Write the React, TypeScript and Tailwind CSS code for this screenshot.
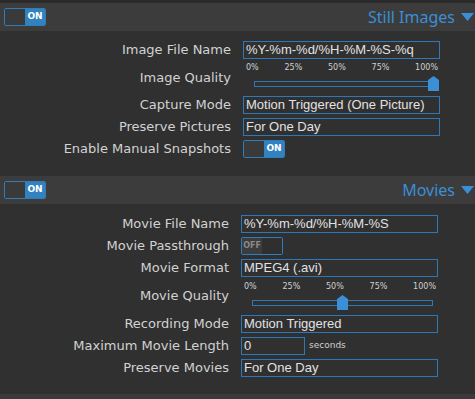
import React from "react";

const font = { fontFamily: '"DejaVu Sans", "Noto Sans", sans-serif' };
const noto = { fontFamily: '"Noto Sans", "DejaVu Sans", sans-serif' };
const lib = { fontFamily: '"Liberation Sans", "Noto Sans", sans-serif' };

function Toggle({ on }: { on: boolean }) {
  return (
    <div className="flex h-[18px] w-[42px] rounded-[2px] border border-[#2f7dbb] overflow-hidden">
      {on ? (
        <>
          <div className="w-[20px] bg-[#3a3a3a]" />
          <div className="flex-1 bg-[#3282c0] flex items-center justify-center text-[9px] font-bold text-white">ON</div>
        </>
      ) : (
        <>
          <div className="w-[20px] bg-[#3c3c3c] flex items-center justify-center text-[8px] font-bold text-[#8a8a8a]">OFF</div>
          <div className="flex-1 bg-[#2f2f2f]" />
        </>
      )}
    </div>
  );
}

function Header({ title }: { title: string }) {
  return (
    <div className="flex items-center justify-between h-[28px] bg-[#3c3c3c] pl-[4px] pr-[1px]">
      <Toggle on />
      <div className="flex items-center gap-[6px] text-[16px] text-[#3a8fd6]" style={noto}>
        <span>{title}</span>
        <svg width="13" height="8" viewBox="0 0 13 8">
          <polygon points="0,0 13,0 6.5,8" fill="#3a8fd6" />
        </svg>
      </div>
    </div>
  );
}

function Row({ label, children, h = "h-[18px]" }: { label: string; children: React.ReactNode; h?: string }) {
  return (
    <div className={`flex items-center ${h}`}>
      <div className="w-[231px] text-right text-[13px] text-[#d2d2d2] whitespace-nowrap">{label}</div>
      <div className="ml-[12px] flex items-center">{children}</div>
    </div>
  );
}

function Input({ value, w = "w-[197px]" }: { value: string; w?: string }) {
  return (
    <div
      className={`${w} h-[18px] border border-[#2f78b5] flex items-center px-[2px] text-[13px] text-[#e2e2e2] whitespace-nowrap overflow-hidden`}
      style={lib}
    >
      {value}
    </div>
  );
}

function Slider({ pct }: { pct: number }) {
  const ticks = ["0%", "25%", "50%", "75%", "100%"];
  return (
    <div className="w-[198px] h-[29px] flex flex-col">
      <div className="flex justify-between text-[8px] text-[#d0d0d0] leading-[10px] px-[3px]">
        {ticks.map((t) => (
          <span key={t}>{t}</span>
        ))}
      </div>
      <div className="relative ml-[11px] mr-[6px] mt-[8px] h-[6px] border border-[#2f78b5]">
        <svg
          className="absolute"
          style={{ left: `calc(${pct}% - 6px)`, top: -6 }}
          width="11"
          height="15"
          viewBox="0 0 11 15"
        >
          <polygon points="0,4 5.5,0 11,4 11,15 0,15" fill="#3a8fd6" />
        </svg>
      </div>
    </div>
  );
}

export default function App() {
  return (
    <div className="w-[475px] h-[399px] bg-[#303030] overflow-hidden flex flex-col" style={font}>
      <div className="h-[3px] bg-[#2a2a2a]" />
      <Header title="Still Images" />
      <div className="flex flex-col gap-[4px] pt-[10px] pb-[18px]">
        <Row label="Image File Name">
          <Input value="%Y-%m-%d/%H-%M-%S-%q" />
        </Row>
        <Row label="Image Quality" h="h-[29px]">
          <Slider pct={100} />
        </Row>
        <Row label="Capture Mode">
          <Input value="Motion Triggered (One Picture)" />
        </Row>
        <Row label="Preserve Pictures">
          <Input value="For One Day" />
        </Row>
        <Row label="Enable Manual Snapshots">
          <Toggle on />
        </Row>
      </div>
      <Header title="Movies" />
      <div className="flex flex-col gap-[4px] pt-[11px] -ml-[2px]">
        <Row label="Movie File Name">
          <Input value="%Y-%m-%d/%H-%M-%S" />
        </Row>
        <Row label="Movie Passthrough">
          <Toggle on={false} />
        </Row>
        <Row label="Movie Format">
          <Input value="MPEG4 (.avi)" />
        </Row>
        <Row label="Movie Quality" h="h-[30px]">
          <Slider pct={50} />
        </Row>
        <Row label="Recording Mode">
          <Input value="Motion Triggered" />
        </Row>
        <Row label="Maximum Movie Length">
          <Input value="0" w="w-[64px]" />
          <span className="ml-[4px] text-[9px] text-[#d0d0d0]">seconds</span>
        </Row>
        <Row label="Preserve Movies">
          <Input value="For One Day" />
        </Row>
      </div>
      <div className="flex-1" />
      <div className="h-[5px] bg-[#3a3a3a]" />
    </div>
  );
}
